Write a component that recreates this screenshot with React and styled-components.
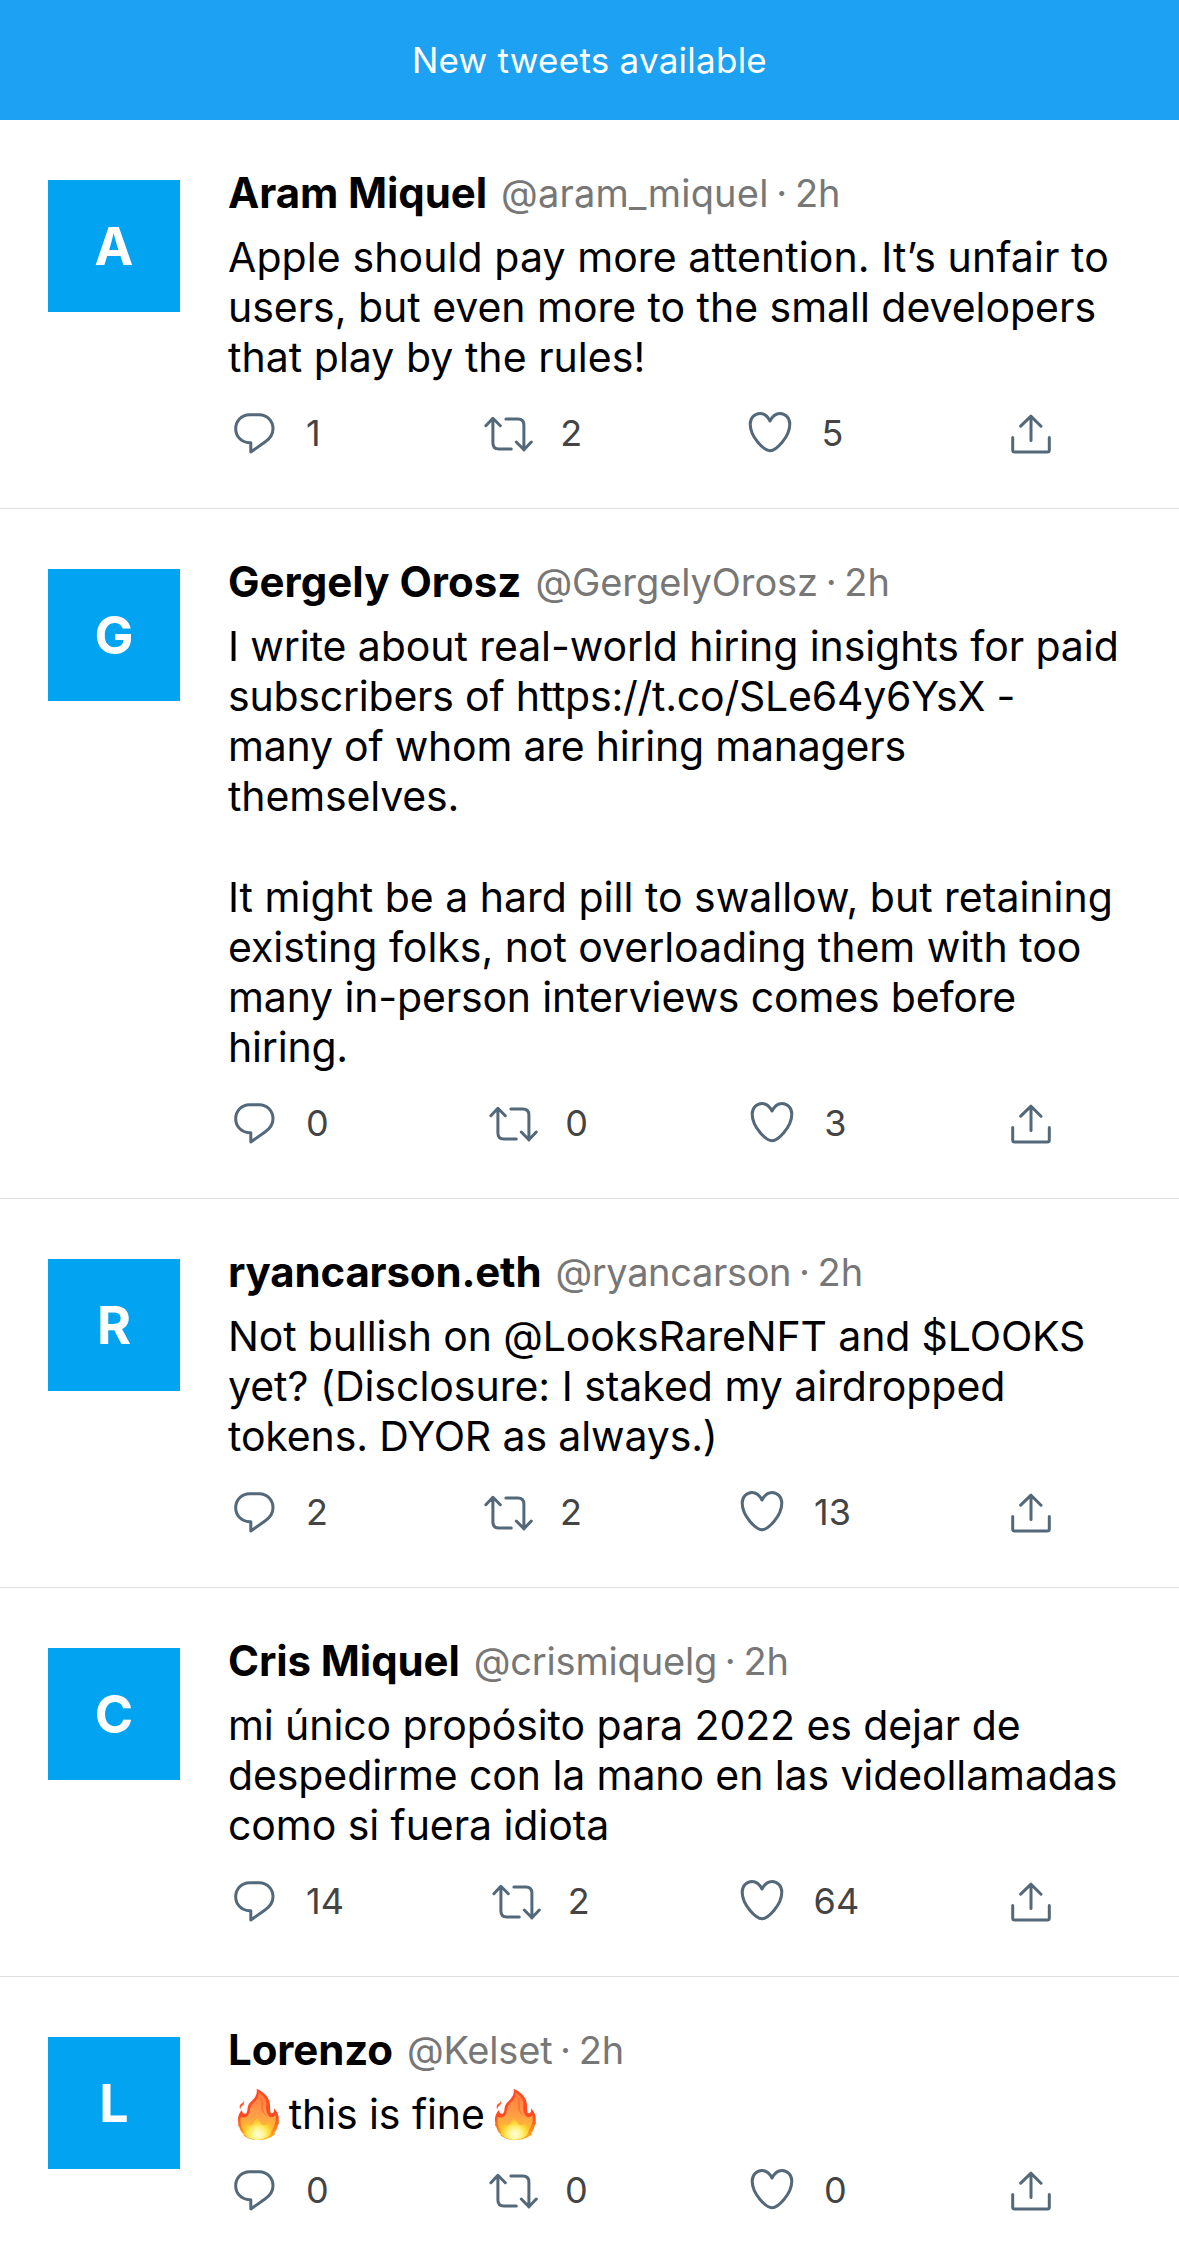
import React from 'react';
import styled, { createGlobalStyle } from 'styled-components';

const GlobalStyle = createGlobalStyle`
  *, *::before, *::after { box-sizing: border-box; }
  body { margin: 0; background: #fff; font-family: Inter, "Liberation Sans", sans-serif; color: #000; }
`;

const Screen = styled.div`
  height: 100vh;
  overflow: hidden;
`;

const Banner = styled.header`
  height: 120px;
  display: flex;
  align-items: center;
  justify-content: center;
  background: #1da1f2;
  color: #fff;
  font-size: 35px;
  line-height: 44px;
  letter-spacing: 0.25px;
`;

const Item = styled.article`
  display: flex;
  gap: 48px;
  padding: 48px 48px 51px;
  border-bottom: 1px solid #ddd;
`;

const Avatar = styled.div`
  flex: none;
  width: 132px;
  height: 132px;
  margin-top: 12px;
  display: flex;
  align-items: center;
  justify-content: center;
  background: #02a4f1;
  color: #fff;
  font-size: 52px;
  font-weight: 700;
`;

const Body = styled.div`
  flex: 1;
  min-width: 0;
`;

const Meta = styled.div`
  display: flex;
  align-items: center;
  gap: 14px;
  height: 50px;
  line-height: 50px;
  white-space: nowrap;
`;

const Name = styled.span`
  font-size: 42px;
  font-weight: 700;
  letter-spacing: ${(p) => p.$track}px;
`;

const Byline = styled.span`
  font-size: 38px;
  color: #777;
  word-spacing: -3px;
`;

const Handle = styled.span`
  letter-spacing: ${(p) => p.$track}px;
`;

const Text = styled.p`
  margin: 13.8px 0 0;
  font-size: 41px;
  line-height: 50.17px;
`;

const Line = styled.span`
  display: flex;
  align-items: center;
  min-height: 50.17px;
  white-space: pre;
  letter-spacing: ${(p) => p.$track}px;
`;

const Flame = styled.svg`
  flex: none;
  width: 44.67px;
  height: 54px;
  margin: -2px 8px;
`;

const Actions = styled.div`
  display: flex;
  justify-content: space-between;
  width: 825px;
  margin: 26.7px 0 0 2px;
`;

const Action = styled.div`
  display: flex;
  align-items: center;
  gap: 28px;
  height: 48px;
  color: #444;
  font-size: 36px;
`;

const Glyph = styled.svg`
  flex: none;
  width: 48px;
  height: 48px;
  fill: none;
  stroke: #536878;
  stroke-width: 3;
  stroke-linecap: round;
  stroke-linejoin: round;
`;

const icons = {
  reply: 'M19.5 5.7H29.3C37 5.7 43 12 43 19.8C43 25 39.5 30 35 33L20.8 43V33.7H19.5C11.5 33.5 5.7 27.5 5.7 19.8C5.7 12 11.7 5.7 19.5 5.7Z',
  retweet: 'M1.9 16.7L8.9 9.3L16.3 16.7M8.9 10V34Q8.9 40 14.9 40H27.3M21.9 10H33.9Q39.9 10 39.9 16V41M32.3 33L39.9 40.7L47.3 33',
  like: 'M24 12C22 8 18.5 4.4 14 4.4C8.5 4.4 4.2 9.2 4.2 15C4.2 28 18 41.7 24 41.7C30 41.7 43.8 28 43.8 15C43.8 9.2 39.5 4.4 34 4.4C29.5 4.4 26 8 24 12Z',
  share: 'M13.7 17.2L24 7.2L34 17.2M24 7.5V31.5M5.7 28.5V41Q5.7 43 7.7 43H40.3Q42.3 43 42.3 41V28.5',
};

const Icon = ({ name }) => (
  <Glyph viewBox="0 0 48 48" overflow="visible" aria-hidden="true"><path d={icons[name]} /></Glyph>
);

const Fire = () => (
  <Flame viewBox="18 18 134 162" role="img" aria-label="🔥">
    <defs>
      <linearGradient id="flame-outer" x1="0" y1="0" x2="0" y2="1">
        <stop offset="0" stopColor="#ff4b26" />
        <stop offset="0.55" stopColor="#ff4a22" />
        <stop offset="0.8" stopColor="#ff8a1c" />
        <stop offset="1" stopColor="#ffb629" />
      </linearGradient>
      <linearGradient id="flame-mid" x1="0" y1="0" x2="0" y2="1">
        <stop offset="0" stopColor="#ff7a3d" />
        <stop offset="0.5" stopColor="#ff9a48" />
        <stop offset="1" stopColor="#ffc52e" />
      </linearGradient>
      <radialGradient id="flame-core" cx="84" cy="160" r="52" gradientUnits="userSpaceOnUse">
        <stop offset="0" stopColor="#fffde0" />
        <stop offset="0.35" stopColor="#fff58a" />
        <stop offset="0.7" stopColor="#ffd932" stopOpacity="0.85" />
        <stop offset="1" stopColor="#ffb42c" stopOpacity="0" />
      </radialGradient>
    </defs>
    <path fill="url(#flame-outer)" d="M80 23C98 31 113 44 118 60C122 74 119 87 122 95C128 101 134 93 132 82C143 93 148 105 146 121L147 127L143 134C141 144 138 151 132 157L137 158C126 168 109 176 90 177H78C62 176 47 170 38 161L44 162C36 157 30 149 28 139L24 133L25 127C21 112 26 97 36 86C35 93 40 99 46 98C54 96 51 83 55 73C60 59 84 53 80 23Z" />
    <path fill="url(#flame-mid)" d="M85 34C102 46 111 58 109 72C107 86 110 100 119 107C125 111 132 108 136 101C140 120 133 142 118 157H47C34 144 29 124 32 108C40 112 52 109 57 98C61 87 59 75 70 66C81 57 87 48 85 34Z" />
    <path fill="#ff5b31" opacity="0.55" d="M88 46C103 58 100 73 99 81C100 91 106 101 112 106C104 101 91 92 93 77C94 67 95 57 88 46Z" />
    <path fill="url(#flame-core)" d="M80 110C89 116 91 129 100 133C110 134 116 125 122 116C132 135 128 154 116 165C98 179 65 179 47 163C36 151 36 133 44 120C49 129 57 136 65 132C73 128 72 116 80 110Z" />
    <ellipse cx="83" cy="155" rx="39" ry="21" fill="url(#flame-core)" />
    <path fill="#ff5b32" d="M41 57C45 66 40 73 35 76C33 79 31 82 31 86C26 75 31 69 37 66C40 64 42 61 41 57Z" />
  </Flame>
);

const tweets = [
  {
    name: 'Aram Miquel', handle: '@aram_miquel', tracks: [-0.1, 0.2], counts: [1, 2, 5],
    lines: [
      ['Apple should pay more attention. It’s unfair to', 0.09],
      ['users, but even more to the small developers', -0.03],
      ['that play by the rules!', 0.03],
    ],
  },
  {
    name: 'Gergely Orosz', handle: '@GergelyOrosz', tracks: [0.03, -0.08], counts: [0, 0, 3],
    lines: [
      ['I write about real-world hiring insights for paid', -0.085],
      ['subscribers of https://t.co/SLe64y6YsX -', -0.22],
      ['many of whom are hiring managers', -0.22],
      ['themselves.', -0.14],
      ['', 0],
      ['It might be a hard pill to swallow, but retaining', 0],
      ['existing folks, not overloading them with too', -0.03],
      ['many in-person interviews comes before', -0.15],
      ['hiring.', -0.2],
    ],
  },
  {
    name: 'ryancarson.eth', handle: '@ryancarson', tracks: [-0.18, -0.34], counts: [2, 2, 13],
    lines: [
      ['Not bullish on @LooksRareNFT and $LOOKS', -0.14],
      ['yet? (Disclosure: I staked my airdropped', -0.02],
      ['tokens. DYOR as always.)', -0.13],
    ],
  },
  {
    name: 'Cris Miquel', handle: '@crismiquelg', tracks: [-0.1, -0.18], counts: [14, 2, 64],
    lines: [
      ['mi único propósito para 2022 es dejar de', -0.09],
      ['despedirme con la mano en las videollamadas', -0.1],
      ['como si fuera idiota', -0.07],
    ],
  },
  {
    name: 'Lorenzo', handle: '@Kelset', tracks: [-0.1, -0.2], counts: [0, 0, 0],
    lines: [[<><Fire />this is fine<Fire /></>, -0.08]],
  },
];

function Tweet({ name, handle, tracks, counts, lines }) {
  return (
    <Item>
      <Avatar>{name[0].toUpperCase()}</Avatar>
      <Body>
        <Meta>
          <Name $track={tracks[0]}>{name}</Name>
          <Byline><Handle $track={tracks[1]}>{handle}</Handle> · 2h</Byline>
        </Meta>
        <Text>{lines.map(([content, spacing], i) => <Line key={i} $track={spacing}>{content}</Line>)}</Text>
        <Actions>
          <Action><Icon name="reply" />{counts[0]}</Action>
          <Action><Icon name="retweet" />{counts[1]}</Action>
          <Action><Icon name="like" />{counts[2]}</Action>
          <Action><Icon name="share" /></Action>
        </Actions>
      </Body>
    </Item>
  );
}

export default function App() {
  return (
    <Screen>
      <GlobalStyle />
      <Banner>New tweets available</Banner>
      <main>{tweets.map((t) => <Tweet key={t.handle} {...t} />)}</main>
    </Screen>
  );
}
